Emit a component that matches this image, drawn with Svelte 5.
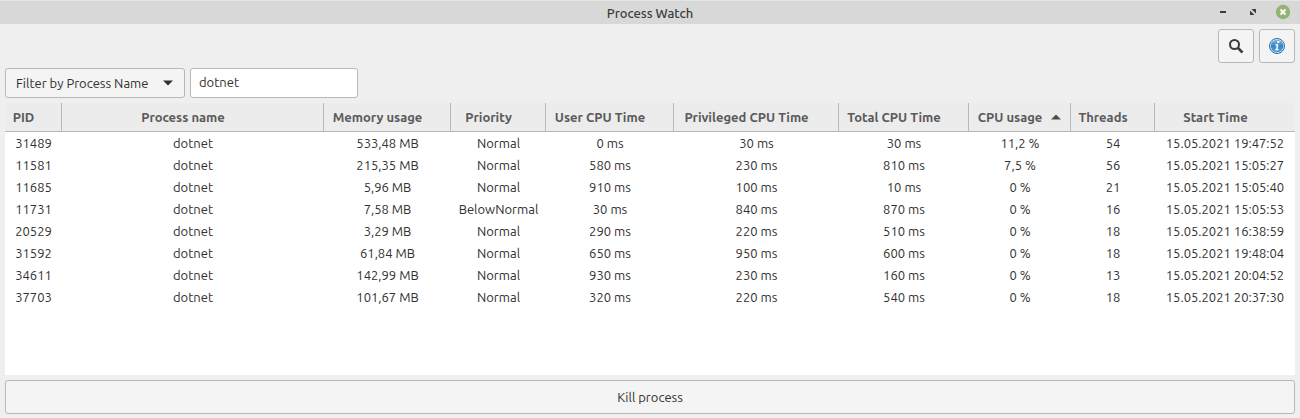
<script>
  const columns = [
    { key: 'pid', label: 'PID', width: 57 },
    { key: 'name', label: 'Process name', width: null },
    { key: 'memory', label: 'Memory usage', width: 127 },
    { key: 'priority', label: 'Priority', width: 95 },
    { key: 'user', label: 'User CPU Time', width: 128 },
    { key: 'privileged', label: 'Privileged CPU Time', width: 165 },
    { key: 'total', label: 'Total CPU Time', width: 130 },
    { key: 'cpu', label: 'CPU usage', width: 102 },
    { key: 'threads', label: 'Threads', width: 84 },
    { key: 'start', label: 'Start Time', width: 140 }
  ];

  const processes = [
    ['31489', 'dotnet', '533,48 MB', 'Normal', '0 ms', '30 ms', '30 ms', '11,2 %', '54', '15.05.2021 19:47:52'],
    ['11581', 'dotnet', '215,35 MB', 'Normal', '580 ms', '230 ms', '810 ms', '7,5 %', '56', '15.05.2021 15:05:27'],
    ['11685', 'dotnet', '5,96 MB', 'Normal', '910 ms', '100 ms', '10 ms', '0 %', '21', '15.05.2021 15:05:40'],
    ['11731', 'dotnet', '7,58 MB', 'BelowNormal', '30 ms', '840 ms', '870 ms', '0 %', '16', '15.05.2021 15:05:53'],
    ['20529', 'dotnet', '3,29 MB', 'Normal', '290 ms', '220 ms', '510 ms', '0 %', '18', '15.05.2021 16:38:59'],
    ['31592', 'dotnet', '61,84 MB', 'Normal', '650 ms', '950 ms', '600 ms', '0 %', '18', '15.05.2021 19:48:04'],
    ['34611', 'dotnet', '142,99 MB', 'Normal', '930 ms', '230 ms', '160 ms', '0 %', '13', '15.05.2021 20:04:52'],
    ['37703', 'dotnet', '101,67 MB', 'Normal', '320 ms', '220 ms', '540 ms', '0 %', '18', '15.05.2021 20:37:30']
  ];

  let filter = $state('dotnet');
  let sortKey = $state('cpu');
  const visible = $derived(processes.filter((p) => p[1].includes(filter)));
</script>

<div class="window">
  <header class="titlebar">
    <h1>Process Watch</h1>
    <div class="controls">
      <button aria-label="Minimize">
        <svg width="16" height="16" viewBox="0 0 16 16"><path d="M5 7h6v2H5z" fill="#3c3c3c" /></svg>
      </button>
      <button aria-label="Restore">
        <svg width="16" height="16" viewBox="0 0 16 16"><path d="M6.5 5H11v4.500zM5 6.500V11h4.500z" fill="#3c3c3c" /></svg>
      </button>
      <button aria-label="Close">
        <svg width="16" height="16" viewBox="0 0 16 16">
          <circle cx="8" cy="8" r="7.200" fill="#92b372" />
          <path d="M5.500 5.500l5 5M10.500 5.500l-5 5" stroke="#fff" stroke-width="2" />
        </svg>
      </button>
    </div>
  </header>

  <main>
    <div class="toolbar">
      <button class="tool" aria-label="Search">
        <svg width="16" height="16" viewBox="0 0 16 16" fill="none" stroke="#3a3a3a">
          <circle cx="6.500" cy="6.500" r="4.500" stroke-width="2" />
          <path d="M10 10l4.500 4.500" stroke-width="2.500" />
        </svg>
      </button>
      <button class="tool" aria-label="About">
        <svg width="16" height="16" viewBox="0 0 16 16">
          <defs>
            <linearGradient id="info" x1="0" y1="0" x2="0" y2="1">
              <stop offset="0" stop-color="#7db8e4" />
              <stop offset="0.500" stop-color="#3584c4" />
              <stop offset="1" stop-color="#4ba5e2" />
            </linearGradient>
          </defs>
          <circle cx="8" cy="8" r="7.500" fill="#d4e5f2" stroke="#2f6ea5" />
          <circle cx="8" cy="8" r="6.300" fill="url(#info)" />
          <path d="M8.500 3h2l-.4 2h-2zM6.500 6.300h3l-1 4.700h1.200l-.3 1.300H6l.3-1.300h.7l.7-3.400H6.200z" fill="#fff" />
        </svg>
      </button>
    </div>

    <div class="filters">
      <div class="picker">
        <select aria-label="Filter type">
          <option>Filter by Process Name</option>
        </select>
        <svg width="10" height="6" viewBox="0 0 10 6"><path d="M0 .5h10L5 5.500z" fill="#303030" /></svg>
      </div>
      <input aria-label="Filter text" type="text" bind:value={filter} />
    </div>

    <div class="list">
      <table>
        <colgroup>
          {#each columns as column}
            <col style:width={column.width ? `${column.width}px` : 'auto'} />
          {/each}
        </colgroup>
        <thead>
          <tr>
            {#each columns as column}
              <th scope="col" aria-sort={sortKey === column.key ? 'descending' : undefined}>
                <button onclick={() => (sortKey = column.key)}>
                  <span>{column.label}</span>
                  <svg width="10" height="6" viewBox="0 0 10 6">
                    {#if sortKey === column.key}<path d="M0 5.500h10L5 .5z" fill="#4e4e4e" />{/if}
                  </svg>
                </button>
              </th>
            {/each}
          </tr>
        </thead>
        <tbody>
          {#each visible as process}
            <tr>
              {#each process as value}<td>{value}</td>{/each}
            </tr>
          {/each}
        </tbody>
      </table>
    </div>

    <button class="kill">Kill process</button>
  </main>
</div>

<style>
  :global(body) {
    margin: 0;
  }
  .window {
    display: flex;
    flex-direction: column;
    min-height: 100vh;
    box-sizing: border-box;
    background: #efefef;
    color: #303030;
    font: 13px/20px Ubuntu, 'Noto Sans', sans-serif;
  }
  button,
  input,
  select {
    box-sizing: border-box;
    margin: 0;
    font: inherit;
    color: inherit;
  }
  svg {
    display: block;
    flex: none;
  }
  .titlebar {
    display: grid;
    grid-template-columns: 1fr auto 1fr;
    align-items: center;
    height: 24px;
    box-sizing: border-box;
    padding: 1px 9px 0;
    background: #d8d8d8;
    border-top: 1px solid #e4e4e4;
  }
  h1 {
    grid-column: 2;
    margin: 0;
    font-size: 13px;
    font-weight: 500;
    color: #3c3c3c;
  }
  .controls {
    display: flex;
    justify-content: flex-end;
    gap: 14px;
    padding-bottom: 2px;
  }
  .controls button {
    padding: 0;
    border: 0;
    background: none;
  }
  main {
    flex: 1;
    display: flex;
    flex-direction: column;
    gap: 5px;
    padding: 5px 5px 4px;
  }
  .toolbar {
    display: flex;
    justify-content: flex-end;
    gap: 5px;
  }
  .tool,
  .kill,
  select,
  input {
    border: 1px solid #b8b8b8;
    border-radius: 3px;
    background: #f4f4f4;
  }
  .tool {
    display: grid;
    place-items: center;
    width: 36px;
    height: 34px;
    padding: 0;
  }
  .filters {
    display: flex;
    gap: 5px;
  }
  .picker {
    display: grid;
    align-items: center;
  }
  .picker > :global(*) {
    grid-area: 1 / 1;
  }
  .picker svg {
    justify-self: end;
    margin-right: 12px;
    pointer-events: none;
  }
  select {
    appearance: none;
    width: 180px;
    height: 30px;
    padding: 0 10px;
  }
  input {
    width: 168px;
    height: 30px;
    padding: 0 8px 2px;
    background: #fff;
  }
  .list {
    flex: 1;
    background: #fff;
  }
  table {
    width: 100%;
    table-layout: fixed;
    border-collapse: separate;
    border-spacing: 0;
  }
  th {
    height: 28px;
    padding: 0;
    background: #ececec;
    border-right: 1px solid #b8b8b8;
    border-bottom: 1px solid #b8b8b8;
    color: #5a5a5a;
  }
  th:last-child {
    border-right: 0;
  }
  th button {
    display: flex;
    align-items: center;
    justify-content: center;
    gap: 9px;
    width: 100%;
    padding: 0;
    border: 0;
    background: none;
    font-weight: 700;
    white-space: nowrap;
  }
  td {
    height: 22px;
    padding: 0;
    text-align: center;
    line-height: 22px;
    white-space: nowrap;
  }
  .kill {
    height: 34px;
  }
</style>
